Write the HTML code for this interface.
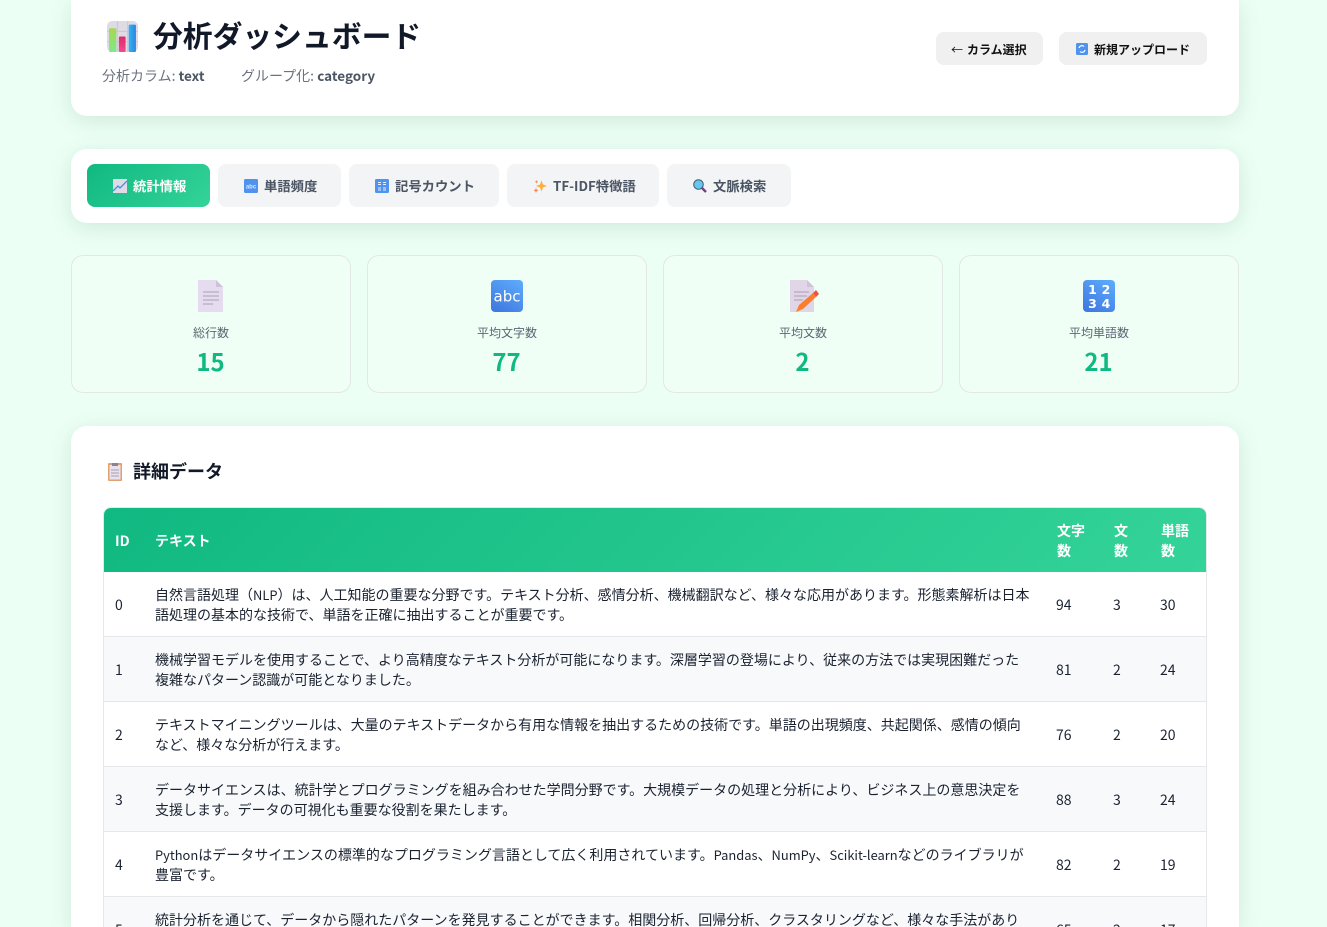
<!DOCTYPE html>
<html lang="ja"><head><meta charset="utf-8"><title>分析ダッシュボード</title>
<style>
*{box-sizing:border-box;margin:0;padding:0}
html,body{width:1327px;height:927px;overflow:hidden}
body{background:#ecfff4;font-family:"Noto Sans CJK JP","Liberation Sans",sans-serif;color:#1f2937;position:relative}
.abs{position:absolute}
.card{position:absolute;background:#fff;box-shadow:0 5px 22px rgba(16,90,60,.13)}
.t{position:absolute;white-space:nowrap}
.btn{position:absolute;top:32px;height:33px;background:#f0f0f0;border-radius:8px;font-size:12px;font-weight:700;color:#111;line-height:35px;white-space:nowrap}
.tab{position:absolute;top:164px;height:43px;border-radius:8px;background:#f3f4f6;color:#4b5563;font-size:13.33px;font-weight:700;line-height:43px;white-space:nowrap}
.tab.on{background:linear-gradient(135deg,#10b981,#34d399);color:#fff}
.tab span{position:absolute;top:0}
.tab svg,.btn svg{position:absolute;width:14px;height:14px;top:15px}
.stat{position:absolute;top:255px;width:280px;height:138px;border:1px solid #e3e8e6;border-radius:12px;background:#effff6;text-align:center}
.stat svg{position:absolute;left:50%;margin-left:-16px;top:24px;width:32px;height:32px}
.stat .l{position:absolute;left:0;right:0;top:68px;font-size:12px;line-height:18px;color:#5f6673}
.stat .v{position:absolute;left:-1px;right:0;top:88px;font-size:24px;font-weight:700;line-height:34px;color:#10b981}
.wrap{position:absolute;left:103px;top:507px;width:1104px;height:420px;border:1px solid #e5e7eb;border-bottom:0;border-radius:8px 8px 0 0;overflow:hidden;background:#fff}
.wrap .h{position:absolute;left:0;top:0;right:0;height:64px;background:linear-gradient(135deg,#10b981,#34d399)}
.r{position:absolute;left:0;right:0;height:65px;border-bottom:1px solid #e5e7eb;font-size:14px;line-height:20px;color:#1a2230}
.r.a{background:#f8f9fb}
.r div{position:absolute;top:23px}
.r .x{left:51px;top:13px;width:884px;white-space:nowrap;font-size:14px}
.r .x i{font-style:normal;font-size:12.9px}
.h div{position:absolute;color:#fff;font-weight:700;font-size:14px;line-height:20px}
.s b{font-size:13.500px}
</style></head><body>

<div class="card" style="left:71px;top:0;width:1168px;height:116px;border-radius:0 0 16px 16px"></div>
<svg class="abs" style="left:107px;top:21px;width:31px;height:31px" viewBox="0 0 30 30"><defs><linearGradient id="g1" x1="0" y1="0" x2="0" y2="1"><stop offset="0" stop-color="#a6d84e"/><stop offset="1" stop-color="#7fe88c"/></linearGradient><linearGradient id="g2" x1="0" y1="0" x2="0" y2="1"><stop offset="0" stop-color="#e02a6a"/><stop offset="1" stop-color="#f04a90"/></linearGradient><linearGradient id="g3" x1="0" y1="0" x2="1" y2="0"><stop offset="0" stop-color="#38b2f5"/><stop offset="1" stop-color="#2a85dd"/></linearGradient></defs><rect width="30" height="30" rx="5" fill="#dfdbe5"/><path d="M0 10h30M0 20h30M10 0v30M20 0v30" stroke="#cbc6d2" stroke-width="1"/><rect x="2" y="7" width="7" height="23" rx="1" fill="url(#g1)"/><rect x="11.500" y="15" width="6.500" height="15" rx="1" fill="url(#g2)"/><rect x="21" y="3.500" width="7" height="26.500" rx="1" fill="url(#g3)"/></svg>
<div class="t" style="left:153px;top:12px;font-size:29.8px;font-weight:700;line-height:44px;color:#111827">分析ダッシュボード</div>
<div class="t s" style="left:102px;top:65px;font-size:14px;line-height:20px;color:#6b7280">分析カラム: <b style="color:#4b5563">text</b></div>
<div class="t s" style="left:241px;top:65px;font-size:14px;line-height:20px;color:#6b7280">グループ化: <b style="color:#4b5563">category</b></div>
<div class="btn" style="left:936px;width:107px"><span class="abs" style="left:15px;font-weight:400">←</span><span class="abs" style="left:31px">カラム選択</span></div>
<div class="btn" style="left:1059px;width:148px"><svg style="left:17px;top:11px;width:12px;height:12px" viewBox="0 0 12 12"><rect width="12" height="12" rx="1.500" fill="#4f93ee"/><path d="M3 5a3 3 0 0 1 5-1.500M9 7a3 3 0 0 1-5 1.500" stroke="#fff" fill="none" stroke-width="1.200"/></svg><span class="abs" style="left:35px">新規アップロード</span></div>

<div class="card" style="left:71px;top:149px;width:1168px;height:74px;border-radius:16px"></div>
<div class="tab on" style="left:87px;width:123px"><svg style="left:26px" viewBox="0 0 14 14"><rect width="14" height="14" fill="#dfdae6"/><path d="M0 12L5 7l2 2 7-7" stroke="#3d8fe8" fill="none" stroke-width="1.300"/></svg><span style="left:46px">統計情報</span></div>
<div class="tab" style="left:218px;width:123px"><svg style="left:26px" viewBox="0 0 14 14"><rect width="14" height="14" rx="1.500" fill="#4f93ee"/><text x="7" y="9.500" font-family="Liberation Sans,sans-serif" font-size="6" fill="#dbe9ff" text-anchor="middle">abc</text></svg><span style="left:46px">単語頻度</span></div>
<div class="tab" style="left:349px;width:150px"><svg style="left:26px" viewBox="0 0 14 14"><rect width="14" height="14" rx="1.500" fill="#4f93ee"/><path d="M3 3.500h3M8 3.500h3M3 5.500h3M8 5.500h3M3 9h3M8 9h3M3 11h3M8 11h3" stroke="#e4eeff" stroke-width="1"/></svg><span style="left:46px">記号カウント</span></div>
<div class="tab" style="left:507px;width:152px"><svg style="left:26px" viewBox="0 0 14 14"><path d="M8.500 1.500l1.500 4 4 1.500-4 1.500-1.500 4-1.500-4-4-1.500 4-1.500z" fill="#fbb03b"/><path d="M3 9l.8 1.500L5.500 11.500l-1.700.8L3 14l-.8-1.700L.5 11.500l1.700-1zM3.500 1l.6 1.200 1.200.6-1.200.6-.6 1.200-.6-1.200-1.200-.6 1.200-.6z" fill="#f88a5e"/></svg><span style="left:46px">TF-IDF特徴語</span></div>
<div class="tab" style="left:667px;width:124px"><svg style="left:26px" viewBox="0 0 14 14"><path d="M8.500 8.500L13 13" stroke="#7a3f8f" stroke-width="2.500"/><circle cx="5.500" cy="5.500" r="4.800" fill="#62c8ee" stroke="#4a5a70" stroke-width="1"/></svg><span style="left:46px">文脈検索</span></div>

<div class="stat" style="left:71px"><svg viewBox="0 0 32 32"><path d="M3 0h18l7 7v25H3z" fill="#e6dcef"/><path d="M21 0l7 7h-7z" fill="#cdc3d4"/><path d="M8 12h16M8 16h16M8 20h16M8 24h10" stroke="#b8aabf" stroke-width="1.300"/></svg><div class="l">総行数</div><div class="v">15</div></div>
<div class="stat" style="left:367px"><svg viewBox="0 0 32 32"><defs><linearGradient id="b" x1="0.800" y1="0" x2="0.200" y2="1"><stop offset="0" stop-color="#5ba9fa"/><stop offset="1" stop-color="#4179e0"/></linearGradient></defs><rect width="32" height="32" rx="4" fill="url(#b)"/><text x="16" y="21.500" font-family="DejaVu Sans,sans-serif" font-size="15" fill="#fff" text-anchor="middle" textLength="27" lengthAdjust="spacingAndGlyphs">abc</text></svg><div class="l">平均文字数</div><div class="v">77</div></div>
<div class="stat" style="left:663px"><svg viewBox="0 0 32 32"><path d="M3 0h17l7 7v25H3z" fill="#e0d6e8"/><path d="M20 0l7 7h-7z" fill="#cdc3d4"/><path d="M7 12h15M7 16h13M7 20h9" stroke="#b8aabf" stroke-width="1.300"/><path d="M9 32l3-7 14-12 3 4-13 12z" fill="#f97f2f"/><path d="M26 13l3-3 3 4-3 3z" fill="#f0503f"/></svg><div class="l">平均文数</div><div class="v">2</div></div>
<div class="stat" style="left:959px"><svg viewBox="0 0 32 32"><rect width="32" height="32" rx="4" fill="url(#b)"/><g font-family="DejaVu Sans,sans-serif" font-weight="700" font-size="12.500" fill="#fff" text-anchor="middle"><text x="9.500" y="14">1</text><text x="23" y="14">2</text><text x="9.500" y="28">3</text><text x="23" y="28">4</text></g></svg><div class="l">平均単語数</div><div class="v">21</div></div>

<div class="card" style="left:71px;top:426px;width:1168px;height:501px;border-radius:16px 16px 0 0"></div>
<svg class="abs" style="left:108px;top:463px;width:14px;height:18px" viewBox="0 0 14 18"><rect width="14" height="18" rx="1" fill="#e0a070"/><rect x="1.500" y="2" width="11" height="14.500" fill="#e8e2ee"/><rect x="4" y="0" width="6" height="3" fill="#8a8290"/><path d="M3 7h8M3 10h8M3 13h8" stroke="#a99fb0" stroke-width="1"/></svg>
<div class="t" style="left:133px;top:458px;font-size:18px;font-weight:700;line-height:26px;color:#111827">詳細データ</div>

<div class="wrap">
<div class="h">
<div style="left:11px;top:23px">ID</div>
<div style="left:51px;top:23px">テキスト</div>
<div style="left:953px;top:13px">文字<br>数</div>
<div style="left:1010px;top:13px">文<br>数</div>
<div style="left:1057px;top:13px">単語<br>数</div>
</div>
<div class="r" style="top:64px"><div style="left:11px">0</div><div class="x">自然言語処理（<i>NLP</i>）は、人工知能の重要な分野です。テキスト分析、感情分析、機械翻訳など、様々な応用があります。形態素解析は日本<br>語処理の基本的な技術で、単語を正確に抽出することが重要です。</div><div style="left:952px">94</div><div style="left:1009px">3</div><div style="left:1056px">30</div></div>
<div class="r a" style="top:129px"><div style="left:11px">1</div><div class="x">機械学習モデルを使用することで、より高精度なテキスト分析が可能になります。深層学習の登場により、従来の方法では実現困難だった<br>複雑なパターン認識が可能となりました。</div><div style="left:952px">81</div><div style="left:1009px">2</div><div style="left:1056px">24</div></div>
<div class="r" style="top:194px"><div style="left:11px">2</div><div class="x">テキストマイニングツールは、大量のテキストデータから有用な情報を抽出するための技術です。単語の出現頻度、共起関係、感情の傾向<br>など、様々な分析が行えます。</div><div style="left:952px">76</div><div style="left:1009px">2</div><div style="left:1056px">20</div></div>
<div class="r a" style="top:259px"><div style="left:11px">3</div><div class="x">データサイエンスは、統計学とプログラミングを組み合わせた学問分野です。大規模データの処理と分析により、ビジネス上の意思決定を<br>支援します。データの可視化も重要な役割を果たします。</div><div style="left:952px">88</div><div style="left:1009px">3</div><div style="left:1056px">24</div></div>
<div class="r" style="top:324px"><div style="left:11px">4</div><div class="x"><i>Python</i>はデータサイエンスの標準的なプログラミング言語として広く利用されています。<i>Pandas</i>、<i>NumPy</i>、<i>Scikit-learn</i>などのライブラリが<br>豊富です。</div><div style="left:952px">82</div><div style="left:1009px">2</div><div style="left:1056px">19</div></div>
<div class="r a" style="top:389px"><div style="left:11px">5</div><div class="x">統計分析を通じて、データから隠れたパターンを発見することができます。相関分析、回帰分析、クラスタリングなど、様々な手法があり<br>ます。</div><div style="left:952px">65</div><div style="left:1009px">2</div><div style="left:1056px">17</div></div>
</div>
</body></html>
